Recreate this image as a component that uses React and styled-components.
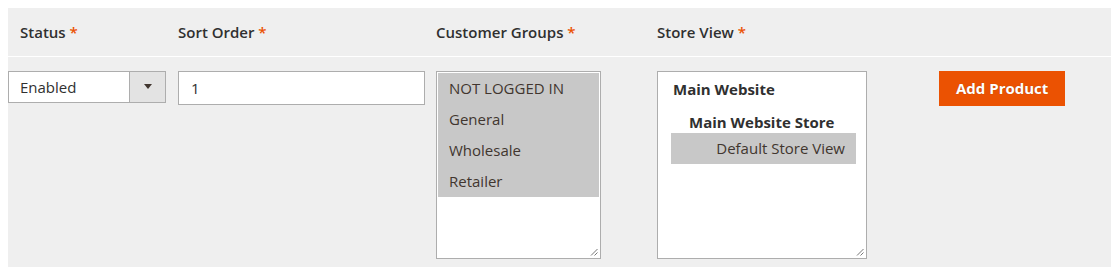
import React from 'react'
import styled, { createGlobalStyle } from 'styled-components'

const GlobalStyle = createGlobalStyle`
    body{
        margin:8px;
        background:#fff;
        font-family:"Open Sans","Noto Sans",sans-serif;
        color:#303030;
    }
    *{box-sizing:border-box;}
`

const groups = ["NOT LOGGED IN", "General", "Wholesale", "Retailer"]

const columns = "170px 258px 221px 282px 1fr"

export default function App() {
    return (
        <>
            <GlobalStyle />
            <Panel>
                <HeadRow>
                    <HeadCell first>Status <Req>*</Req></HeadCell>
                    <HeadCell>Sort Order <Req>*</Req></HeadCell>
                    <HeadCell>Customer Groups <Req>*</Req></HeadCell>
                    <HeadCell>Store View <Req>*</Req></HeadCell>
                    <HeadCell />
                </HeadRow>
                <BodyRow>
                    <Cell>
                        <Select>
                            <SelectValue>Enabled</SelectValue>
                            <SelectArrow><Caret /></SelectArrow>
                        </Select>
                    </Cell>
                    <Cell>
                        <TextInput>1</TextInput>
                    </Cell>
                    <Cell>
                        <MultiSelect width={165}>
                            {groups.map((g) => (
                                <Option key={g} selected>{g}</Option>
                            ))}
                            <Grip />
                        </MultiSelect>
                    </Cell>
                    <Cell>
                        <MultiSelect width={210}>
                            <Group>Main Website</Group>
                            <SubGroup>Main Website Store</SubGroup>
                            <StoreOption>Default Store View</StoreOption>
                            <Grip />
                        </MultiSelect>
                    </Cell>
                    <Cell>
                        <AddButton>Add Product</AddButton>
                    </Cell>
                </BodyRow>
            </Panel>
        </>
    )
}

function Grip() {
    return (
        <GripIcon width="8" height="8" viewBox="0 0 8 8">
            <path d="M1 7.5L7.5 1M4.5 7.5L7.5 4.5" stroke="#777" strokeWidth="1" fill="none" />
        </GripIcon>
    )
}

const Panel = styled.div`
    background:#efefef;
    width:1104px;
    height:280px;`
const HeadRow = styled.div`
    display:grid;
    grid-template-columns:${columns};
    height:49px;
    border-bottom:1px solid #fff;
    align-items:center;`
const HeadCell = styled.div`
    font-size:15px;
    font-weight:600;
    color:#303030;
    padding-left:${(p) => (p.first ? "12px" : "0")};
    margin-top:-1px;`
const Req = styled.span`
    color:#eb5202;`
const BodyRow = styled.div`
    display:grid;
    grid-template-columns:${columns};
    padding-top:14px;
    align-items:start;`
const Cell = styled.div`
    display:flex;`
const Select = styled.div`
    display:flex;
    width:158px;
    height:32px;
    border:1px solid #adadad;
    background:#fff;`
const SelectValue = styled.div`
    flex:1;
    font-size:15px;
    line-height:30px;
    padding-left:11px;`
const SelectArrow = styled.div`
    width:36px;
    background:#e3e3e3;
    border-left:1px solid #adadad;
    display:flex;
    align-items:center;
    justify-content:center;`
const Caret = styled.span`
    width:0;
    height:0;
    border-left:4px solid transparent;
    border-right:4px solid transparent;
    border-top:5px solid #41362f;
    margin-top:-2px;`
const TextInput = styled.div`
    width:247px;
    height:34px;
    border:1px solid #adadad;
    background:#fff;
    font-size:15px;
    line-height:32px;
    padding-left:12px;`
const MultiSelect = styled.div`
    position:relative;
    width:${(p) => p.width}px;
    height:188px;
    border:1px solid #adadad;
    background:#fff;
    padding:1px;`
const Option = styled.div`
    height:31px;
    line-height:31px;
    font-size:15px;
    padding-left:11px;
    background:${(p) => (p.selected ? "#c8c8c8" : "transparent")};
    color:#41362f;`
const Group = styled.div`
    font-size:15px;
    font-weight:700;
    color:#303030;
    height:32px;
    line-height:32px;
    padding-left:14px;`
const SubGroup = styled(Group)`
    height:28px;
    line-height:22px;
    padding-top:6px;
    padding-left:30px;`
const StoreOption = styled.div`
    margin-left:12px;
    width:185px;
    height:31px;
    line-height:31px;
    background:#c8c8c8;
    font-size:15px;
    color:#41362f;
    text-align:right;
    padding-right:11px;`
const GripIcon = styled.svg`
    position:absolute;
    right:2px;
    bottom:2px;`
const AddButton = styled.div`
    background:#eb5202;
    color:#fff;
    font-size:15px;
    font-weight:700;
    height:35px;
    line-height:35px;
    padding:0 17px;
    text-shadow:0 0 1px rgba(0,0,0,0.3);`
